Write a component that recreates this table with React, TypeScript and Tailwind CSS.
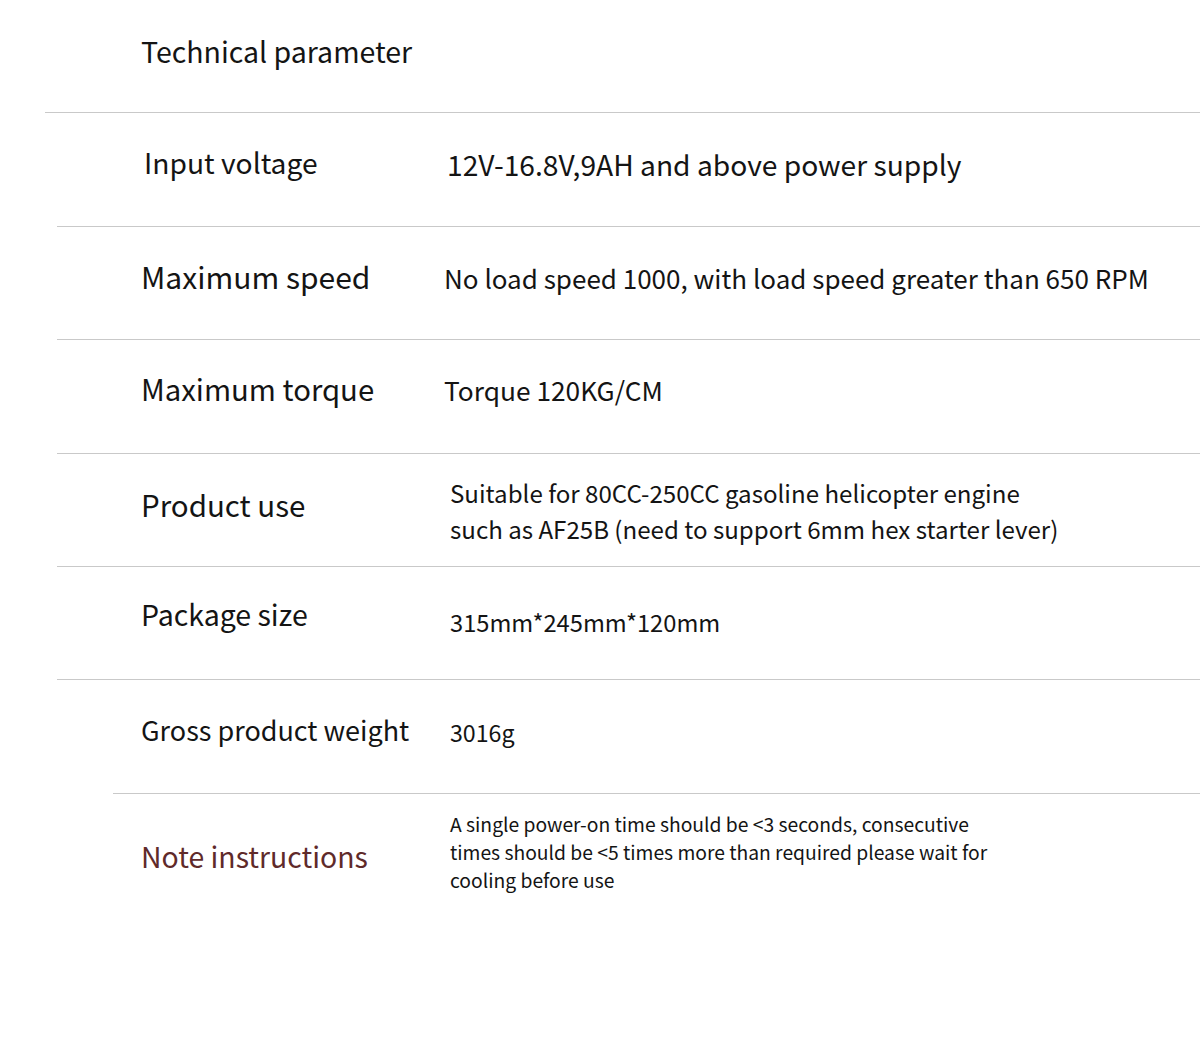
import React from 'react';

interface SpecRow {
  label: string;
  value: React.ReactNode;
  rowClass: string;
  labelClass: string;
  valueClass: string;
}

const rows: SpecRow[] = [
  {
    label: 'Input voltage',
    value: '12V-16.8V,9AH and above power supply',
    rowClass: 'h-[114px] ml-[57px] pl-[87px] border-b',
    labelClass: 'w-[303px] text-[28.2px] leading-none -mt-[14px]',
    valueClass: 'text-[28.2px] leading-none -mt-[10px]',
  },
  {
    label: 'Maximum speed',
    value: 'No load speed 1000, with load speed greater than 650 RPM',
    rowClass: 'h-[113px] ml-[57px] pl-[84px] border-b',
    labelClass: 'w-[303px] text-[30px] leading-none -mt-[14px]',
    valueClass: 'text-[26px] leading-none -mt-[10px]',
  },
  {
    label: 'Maximum torque',
    value: 'Torque 120KG/CM',
    rowClass: 'h-[114px] ml-[57px] pl-[84px] border-b',
    labelClass: 'w-[303px] text-[29.3px] leading-none -mt-[16px]',
    valueClass: 'text-[26.3px] leading-none -mt-[12px]',
  },
  {
    label: 'Product use',
    value: (
      <>
        Suitable for 80CC-250CC gasoline helicopter engine
        <br />
        such as AF25B (need to support 6mm hex starter lever)
      </>
    ),
    rowClass: 'h-[113px] ml-[57px] pl-[84px] border-b',
    labelClass: 'w-[309px] text-[29.5px] leading-none -mt-[10px]',
    valueClass: 'text-[24.1px] leading-[36px] mt-[2px]',
  },
  {
    label: 'Package size',
    value: '315mm*245mm*120mm',
    rowClass: 'h-[113px] ml-[57px] pl-[84px] border-b',
    labelClass: 'w-[309px] text-[28.5px] leading-none -mt-[18px]',
    valueClass: 'text-[23.7px] leading-none',
  },
  {
    label: 'Gross product weight',
    value: '3016g',
    rowClass: 'h-[114px] ml-[113px] pl-[28px] border-b',
    labelClass: 'w-[309px] text-[27px] leading-none -mt-[14px]',
    valueClass: 'text-[23.2px] leading-none -mt-[8px]',
  },
];

export default function App() {
  return (
    <div
      className="w-[1200px] h-[1064px] bg-white text-[#141414] overflow-hidden"
      style={{ fontFamily: '"Noto Sans CJK SC", "Noto Sans", sans-serif' }}
    >
      {/* Header */}
      <div className="h-[113px] ml-[45px] pl-[96px] border-b border-[#c9c9c9] flex items-start">
        <h1 className="text-[28.5px] leading-none mt-[37px] font-normal">Technical parameter</h1>
      </div>

      {/* Spec rows */}
      {rows.map((row) => (
        <div key={row.label} className={`flex items-center border-[#c9c9c9] ${row.rowClass}`}>
          <div className={`shrink-0 ${row.labelClass}`}>{row.label}</div>
          <div className={row.valueClass}>{row.value}</div>
        </div>
      ))}

      {/* Note */}
      <div className="h-[128px] pl-[141px] flex items-center">
        <div className="w-[309px] shrink-0 text-[28.4px] leading-none text-[#5f2a2a] -mt-[4px]">
          Note instructions
        </div>
        <div className="text-[19.3px] leading-[28px] w-[560px] -mt-[12px]">
          A single power-on time should be &lt;3 seconds, consecutive
          <br />
          times should be &lt;5 times more than required please wait for
          <br />
          cooling before use
        </div>
      </div>
    </div>
  );
}
